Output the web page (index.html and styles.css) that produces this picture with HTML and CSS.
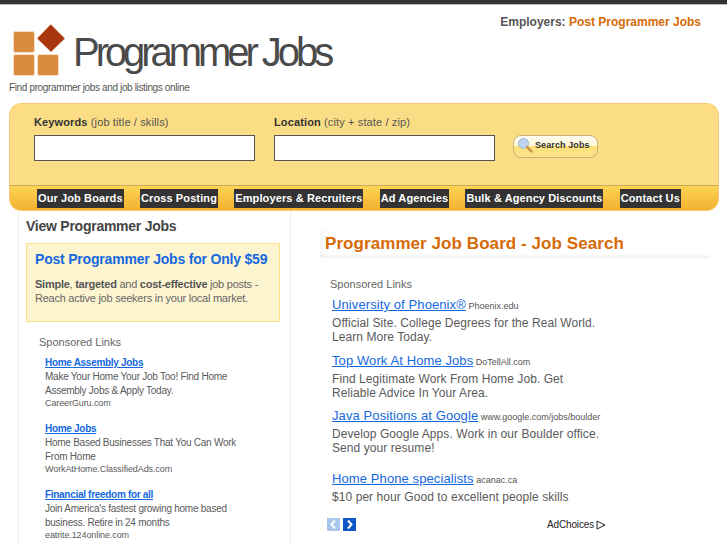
FILE: index.html
```html
<!DOCTYPE html>
<html lang="en">
<head>
<meta charset="utf-8">
<title>Programmer Jobs</title>
<link rel="stylesheet" href="styles.css">
</head>
<body>
<div class="topbar"></div>
<header class="header">
  <div class="brand">
    <div class="logo-row">
      <svg class="logo" width="54" height="52" viewBox="0 0 54 52" aria-hidden="true">
        <rect x="0.5" y="7.5" width="21" height="21" rx="2" fill="#d98b3e" stroke="#f6dcc0"/>
        <rect x="0.5" y="30.5" width="21" height="21" rx="2" fill="#d98b3e" stroke="#f6dcc0"/>
        <rect x="24.5" y="30.5" width="21" height="21" rx="2" fill="#d98b3e" stroke="#f6dcc0"/>
        <path d="M38 0.5 L51.5 14 Q52 14.500 51.500 15 L38.500 27.500 Q38 28 37.500 27.500 L24.500 15 Q24 14.500 24.500 14 L37.500 0.500 Z" fill="#a9350f" stroke="#f0c8b0" stroke-width="0.6"/>
      </svg>
      <div class="site-title">Programmer Jobs</div>
    </div>
    <p class="tagline">Find programmer jobs and job listings online</p>
  </div>
  <div class="employers">Employers: <a href="#">Post Programmer Jobs</a></div>
</header>

<section class="panel">
  <form class="search">
    <label class="field">
      <span class="field-label"><b>Keywords</b> (job title / skills)</span>
      <input class="text-input" type="text">
    </label>
    <label class="field">
      <span class="field-label"><b>Location</b> (city + state / zip)</span>
      <input class="text-input" type="text">
    </label>
    <button class="search-btn" type="button">
      <svg width="16" height="16" viewBox="0 0 16 16" aria-hidden="true">
        <circle cx="6.500" cy="6.500" r="5" fill="#bcd6f2" stroke="#9db8d4"/>
        <path d="M10 10 L14.500 14.500" stroke="#c98a4a" stroke-width="2.400" stroke-linecap="round"/>
      </svg>
      <span>Search Jobs</span>
    </button>
  </form>
  <nav class="nav">
    <a href="#">Our Job Boards</a>
    <a href="#">Cross Posting</a>
    <a href="#">Employers &amp; Recruiters</a>
    <a href="#">Ad Agencies</a>
    <a href="#">Bulk &amp; Agency Discounts</a>
    <a href="#">Contact Us</a>
  </nav>
</section>

<div class="columns">
  <aside class="sidebar">
    <h2 class="side-title">View Programmer Jobs</h2>
    <div class="promo">
      <a class="promo-title" href="#">Post Programmer Jobs for Only $59</a>
      <p class="promo-text"><b>Simple</b>, <b>targeted</b> and <b>cost-effective</b> job posts - Reach active job seekers in your local market.</p>
    </div>
    <div class="side-ads">
      <div class="ads-label">Sponsored Links</div>
      <div class="side-ad">
        <a href="#">Home Assembly Jobs</a>
        <p>Make Your Home Your Job Too! Find Home Assembly Jobs &amp; Apply Today.</p>
        <span>CareerGuru.com</span>
      </div>
      <div class="side-ad">
        <a href="#">Home Jobs</a>
        <p>Home Based Businesses That You Can Work From Home</p>
        <span>WorkAtHome.ClassifiedAds.com</span>
      </div>
      <div class="side-ad">
        <a href="#">Financial freedom for all</a>
        <p>Join America's fastest growing home based business. Retire in 24 months</p>
        <span>eatrite.124online.com</span>
      </div>
    </div>
  </aside>

  <main class="main">
    <h1 class="main-title">Programmer Job Board - Job Search</h1>
    <div class="ads-label main-label">Sponsored Links</div>
    <div class="main-ad">
      <div class="ad-head"><a href="#">University of Phoenix®</a> <span>Phoenix.edu</span></div>
      <p>Official Site. College Degrees for the Real World. Learn More Today.</p>
    </div>
    <div class="main-ad">
      <div class="ad-head"><a href="#">Top Work At Home Jobs</a> <span>DoTellAll.com</span></div>
      <p>Find Legitimate Work From Home Job. Get Reliable Advice In Your Area.</p>
    </div>
    <div class="main-ad tight">
      <div class="ad-head"><a href="#">Java Positions at Google</a> <span>www.google.com/jobs/boulder</span></div>
      <p>Develop Google Apps. Work in our Boulder office. Send your resume!</p>
    </div>
    <div class="main-ad gap">
      <div class="ad-head"><a href="#">Home Phone specialists</a> <span>acanac.ca</span></div>
      <p>$10 per hour Good to excellent people skills</p>
    </div>
    <div class="ad-foot">
      <div class="pager">
        <span class="page-btn off"><svg width="13" height="13" viewBox="0 0 13 13"><path d="M8 2.500 L4.500 6.500 L8 10.500" fill="none" stroke="#fff" stroke-width="2"/></svg></span>
        <span class="page-btn"><svg width="13" height="13" viewBox="0 0 13 13"><path d="M5 2.500 L8.500 6.500 L5 10.500" fill="none" stroke="#fff" stroke-width="2"/></svg></span>
      </div>
      <div class="adchoices">AdChoices
        <svg width="10" height="10" viewBox="0 0 10 10"><path d="M1 1 L9 5 L1 9 Z" fill="none" stroke="#222" stroke-width="1"/></svg>
      </div>
    </div>
    <div class="next-ad"><a href="#">D</a></div>
  </main>
</div>
</body>
</html>
```

FILE: styles.css
```css
* { box-sizing: border-box; }
html, body { margin: 0; padding: 0; height: 545px; overflow: hidden; }
body { background: #fff; color: #555; font-family: "Liberation Sans", Arial, sans-serif; }
a { text-decoration: none; }
p { margin: 0; }

.topbar { height: 5px; background: #333; border-bottom: 1px solid #bbb; }

.header { display: flex; justify-content: space-between; height: 98px; padding-left: 9px; }
.logo-row { display: flex; align-items: center; height: 52px; margin-top: 19px; padding-left: 4px; }
.logo { flex: none; }
.site-title { margin-left: 6px; padding-top: 3px; font-size: 40px; letter-spacing: -4.050px; color: #4a4a4a; line-height: 52px; }
.tagline { margin-top: 5px; font-size: 10px; line-height: 14px; color: #555; letter-spacing: -0.360px; }
.employers { margin: 10px 26px 0 0; font-size: 12px; line-height: 14px; font-weight: bold; color: #555; }
.employers a { color: #d66a06; }

.panel { margin: 0 8px 0 9px; height: 108px; border: 1px solid #fbc974; border-radius: 12px; background: #fadd84; overflow: hidden; }
.search { display: flex; height: 81px; padding: 11px 0 0 24px; align-items: flex-start; }
.field { display: flex; flex-direction: column; width: 221px; margin-right: 19px; }
.field-label { font-size: 11px; line-height: 14px; color: #555; margin-bottom: 6px; letter-spacing: 0.130px; }
.field-label b { color: #333; }
.text-input { width: 221px; height: 26px; border: 1px solid #555; background: #fff; padding: 0; }
.search-btn { display: flex; align-items: center; gap: 2px; width: 85px; height: 23px; margin: 20px 0 0 -1px; padding: 0 0 3px 3px; border: 1px solid #c9b37a; border-radius: 8px; background: linear-gradient(#fffdf3 0, #fff6d2 50%, #fbe27a 50%, #fbe388 100%); font: bold 9px/12px "Liberation Sans", Arial, sans-serif; color: #333; letter-spacing: 0.1px; }

.nav { display: flex; gap: 16.300px; height: 25px; padding: 3px 0 0 27px; border-top: 1px solid #c8ab5a; background: linear-gradient(#fed453, #f3b12f); }
.nav a { display: block; height: 19px; padding: 0 1px; background: #333; color: #fff; font-size: 11px; font-weight: bold; line-height: 18px; letter-spacing: 0.110px; white-space: nowrap; }

.columns { display: flex; margin-left: 18px; height: 335px; }
.sidebar { flex: none; width: 273px; padding: 7px 10px 0 7px; border-left: 1px dotted #ddd; border-right: 1px dotted #ddd; }
.side-title { margin: 0; font-size: 14px; line-height: 17px; font-weight: bold; color: #444; letter-spacing: -0.250px; }
.promo { margin-top: 8px; height: 79px; padding: 6px 8px 0; border: 1px solid #fbe08e; background: #fdf5d0; }
.promo-title { font-size: 14px; line-height: 18px; font-weight: bold; color: #1568e0; display: block; white-space: nowrap; letter-spacing: -0.200px; }
.promo-text { margin-top: 9px; font-size: 11px; line-height: 14px; color: #666; letter-spacing: -0.250px; }
.promo-text b { color: #555; }

.side-ads { padding: 13px 0 0 13px; }
.ads-label { font-size: 11px; line-height: 14px; color: #666; }
.side-ads .ads-label { margin-bottom: 7px; }
.side-ad { margin: 0 0 12px 6px; font-size: 10px; color: #5a5a5a; padding-right: 35px; }
.side-ad:last-child { margin-bottom: 0; }
.side-ad a { display: block; color: #1568e0; font-weight: bold; line-height: 14px; text-decoration: underline; letter-spacing: -0.300px; }
.side-ad p { line-height: 13.500px; letter-spacing: -0.250px; }
.side-ad span { display: block; font-size: 9px; line-height: 13px; letter-spacing: -0.100px; }

.main { flex: 1; min-width: 0; padding: 0 17px 0 29px; }
.main-title { margin: 16px 0 0 0; padding: 6px 0 3px 5px; font-size: 17px; line-height: 22px; font-weight: bold; color: #d66a06; white-space: nowrap; letter-spacing: 0.070px; border-top-left-radius: 10px; background: linear-gradient(to top, #eee, rgba(255,255,255,0) 4px), linear-gradient(to right, #f2f2f2, #fff 7px); }
.main-label { margin-top: 19px; margin-left: 10px; }
.main-ad { margin: 6px 0 0 12px; width: 272px; }
.main-ad + .main-ad { margin-top: 9px; }
.main-ad.tight { margin-top: 8px; }
.main-ad.gap { margin-top: 16px; }
.ad-head { font-size: 9px; line-height: 16px; white-space: nowrap; color: #555; }
.ad-head a { font-size: 13px; color: #1568e0; text-decoration: underline; letter-spacing: 0.100px; }
.main-ad p { margin-top: 2px; font-size: 12px; line-height: 14px; color: #5a5a5a; letter-spacing: 0.070px; }

.ad-foot { display: flex; justify-content: space-between; align-items: center; width: 279px; margin: 14px 0 0 7px; }
.pager { display: flex; gap: 3px; }
.page-btn { display: block; width: 13px; height: 13px; background: #0d57c7; }
.page-btn.off { background: #a9c7ee; }
.page-btn svg { display: block; }
.adchoices { display: flex; align-items: center; gap: 2px; font-size: 10px; color: #222; letter-spacing: -0.150px; }
.next-ad { margin: 13px 0 0 12px; font-size: 13px; line-height: 16px; }
.next-ad a { color: #1568e0; }
```
